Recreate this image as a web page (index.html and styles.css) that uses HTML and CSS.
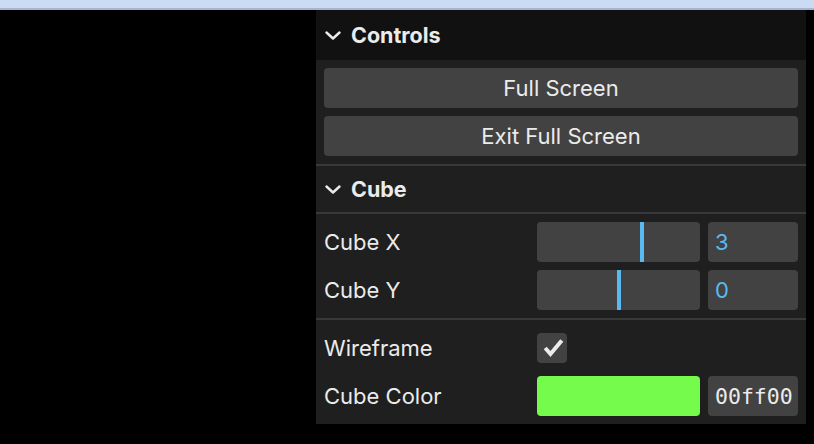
FILE: index.html
```html
<!DOCTYPE html>
<html>
<head>
<meta charset="utf-8">
<link rel="stylesheet" href="styles.css">
</head>
<body>
<div class="topbar"></div>
<div class="stage">
  <div class="gui">
    <div class="title root-title">
      <svg class="chev" width="16" height="9" viewBox="0 0 16 9"><polyline points="1.5,1.5 8,7.5 14.5,1.5" fill="none" stroke="#ebebeb" stroke-width="2.4" stroke-linecap="round" stroke-linejoin="round"/></svg>
      <span>Controls</span>
    </div>
    <div class="group">
      <button class="btn">Full Screen</button>
      <button class="btn">Exit Full Screen</button>
    </div>
    <div class="folder">
      <div class="title">
        <svg class="chev" width="16" height="9" viewBox="0 0 16 9"><polyline points="1.5,1.5 8,7.5 14.5,1.5" fill="none" stroke="#ebebeb" stroke-width="2.4" stroke-linecap="round" stroke-linejoin="round"/></svg>
        <span>Cube</span>
      </div>
    </div>
    <div class="group">
      <div class="ctrl">
        <div class="name">Cube X</div>
        <div class="widget">
          <div class="slider"><div class="fill" style="width:107px"></div></div>
          <div class="num">3</div>
        </div>
      </div>
      <div class="ctrl">
        <div class="name">Cube Y</div>
        <div class="widget">
          <div class="slider"><div class="fill" style="width:84px"></div></div>
          <div class="num">0</div>
        </div>
      </div>
    </div>
    <div class="sep"></div>
    <div class="group">
      <div class="ctrl">
        <div class="name">Wireframe</div>
        <div class="widget">
          <div class="check">
            <svg width="30" height="30" viewBox="0 0 30 30"><polyline points="9.5,16.5 13.5,21 23.5,9" fill="none" stroke="#ebebeb" stroke-width="4" stroke-linecap="square" stroke-linejoin="miter"/></svg>
          </div>
        </div>
      </div>
      <div class="ctrl">
        <div class="name">Cube Color</div>
        <div class="widget">
          <div class="swatch"></div>
          <div class="hex">00ff00</div>
        </div>
      </div>
    </div>
  </div>
</div>
</body>
</html>
```
FILE: styles.css
```css
html, body {
  margin: 0;
  padding: 0;
  background: #000;
}
body {
  font-family: Inter, "Open Sans", sans-serif;
  font-size: 22px;
  color: #ebebeb;
}
.topbar {
  height: 8px;
  background: #ccdbf4;
  border-bottom: 2px solid #a8b3cc;
}
.stage {
  display: flex;
  justify-content: flex-end;
  padding-right: 8px;
}
.gui {
  width: 490px;
  background: #1f1f1f;
}
.title {
  height: 46px;
  display: flex;
  align-items: center;
  padding-left: 9px;
  font-weight: 700;
  font-size: 21.5px;
}
.root-title {
  height: 50px;
  background: #111111;
}
.chev {
  margin-right: 10px;
  margin-top: 1px;
}
.group {
  display: flex;
  flex-direction: column;
  gap: 8px;
  padding: 8px;
}
.btn {
  height: 40px;
  border: none;
  border-radius: 4px;
  background: #424242;
  color: #ebebeb;
  font-family: inherit;
  font-size: 22px;
  padding: 0;
}
.folder {
  border-top: 2px solid #383838;
  border-bottom: 2px solid #383838;
}
.sep {
  height: 2px;
  background: #383838;
}
.ctrl {
  height: 40px;
  display: flex;
  align-items: center;
}
.name {
  flex: 0 0 213px;
  box-sizing: border-box;
}
.widget {
  flex: 1;
  display: flex;
  align-items: center;
  gap: 8px;
  height: 40px;
}
.slider {
  flex: 1;
  height: 40px;
  background: #424242;
  border-radius: 4px;
  overflow: hidden;
}
.fill {
  height: 100%;
  box-sizing: border-box;
  border-right: 4px solid #5bb9f1;
}
.num {
  width: 83px;
  height: 40px;
  background: #424242;
  border-radius: 4px;
  color: #5bb9f1;
  display: flex;
  align-items: center;
  padding-left: 7px;
}
.check {
  width: 30px;
  height: 30px;
  background: #424242;
  border-radius: 4px;
}
.check svg {
  display: block;
}
.swatch {
  flex: 1;
  height: 40px;
  background: #75fb4c;
  border-radius: 4px;
}
.hex {
  width: 83px;
  height: 40px;
  background: #424242;
  border-radius: 4px;
  display: flex;
  align-items: center;
  padding-left: 7px;
  font-family: "DejaVu Sans Mono", monospace;
  font-size: 21.5px;
}
```
